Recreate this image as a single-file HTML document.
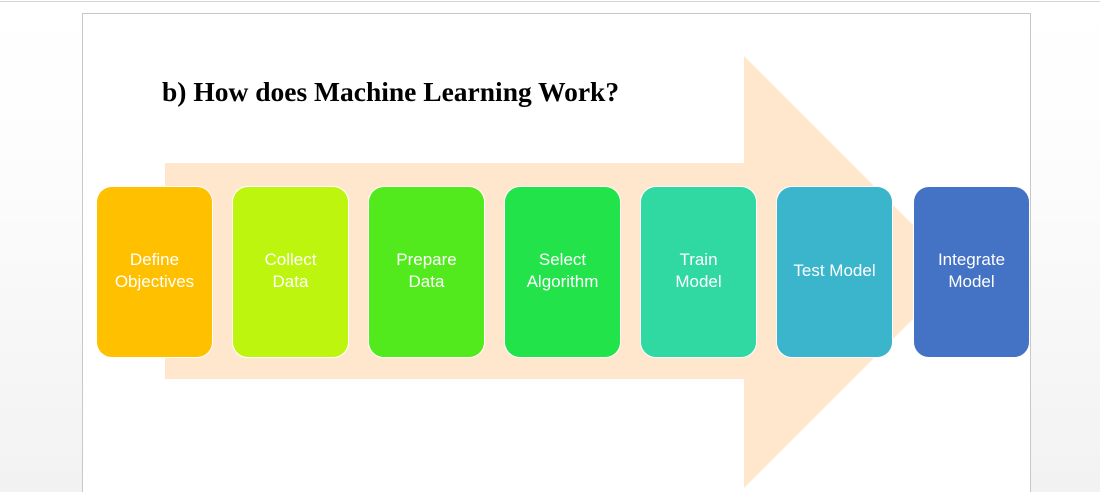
<!DOCTYPE html>
<html><head><style>
html,body{margin:0;padding:0;width:1100px;height:492px;overflow:hidden}
body{position:relative;background:linear-gradient(#fff 0%,#fdfdfd 30%,#f2f2f2 100%);font-family:"Liberation Sans",sans-serif}
.topline{position:absolute;left:0;top:1px;width:1100px;height:1px;background:#d4d4d4}
.page{position:absolute;left:82px;top:13px;width:947px;height:490px;background:#fff;border:1px solid #c8c8c8}
svg{position:absolute;left:0;top:0}
h1{position:absolute;left:162px;top:76px;margin:0;font:bold 27.5px "Liberation Serif",serif;color:#000;white-space:nowrap}
.b{position:absolute;top:186px;border:1px solid #fff;border-radius:16px;color:#fff;font-size:17px;line-height:22px;display:flex;align-items:center;justify-content:center;text-align:center;box-sizing:border-box;height:172px;width:117px;padding-bottom:2px}
</style></head><body>
<div class="topline"></div>
<div class="page"></div>
<svg width="1100" height="492"><polygon points="165,163 744,163 744,56 960,272 744,488 744,379 165,379" fill="#fee7cd"/></svg>
<h1>b) How does Machine Learning Work?</h1>
<div class="b" style="left:96px;background:#ffc000">Define<br>Objectives</div>
<div class="b" style="left:232px;background:#bef50e">Collect<br>Data</div>
<div class="b" style="left:368px;background:#52ea1c">Prepare<br>Data</div>
<div class="b" style="left:504px;background:#22e34a">Select<br>Algorithm</div>
<div class="b" style="left:640px;background:#30d8a2">Train<br>Model</div>
<div class="b" style="left:776px;background:#3ab5cc">Test Model</div>
<div class="b" style="left:913px;background:#4472c4">Integrate<br>Model</div>
</body></html>
